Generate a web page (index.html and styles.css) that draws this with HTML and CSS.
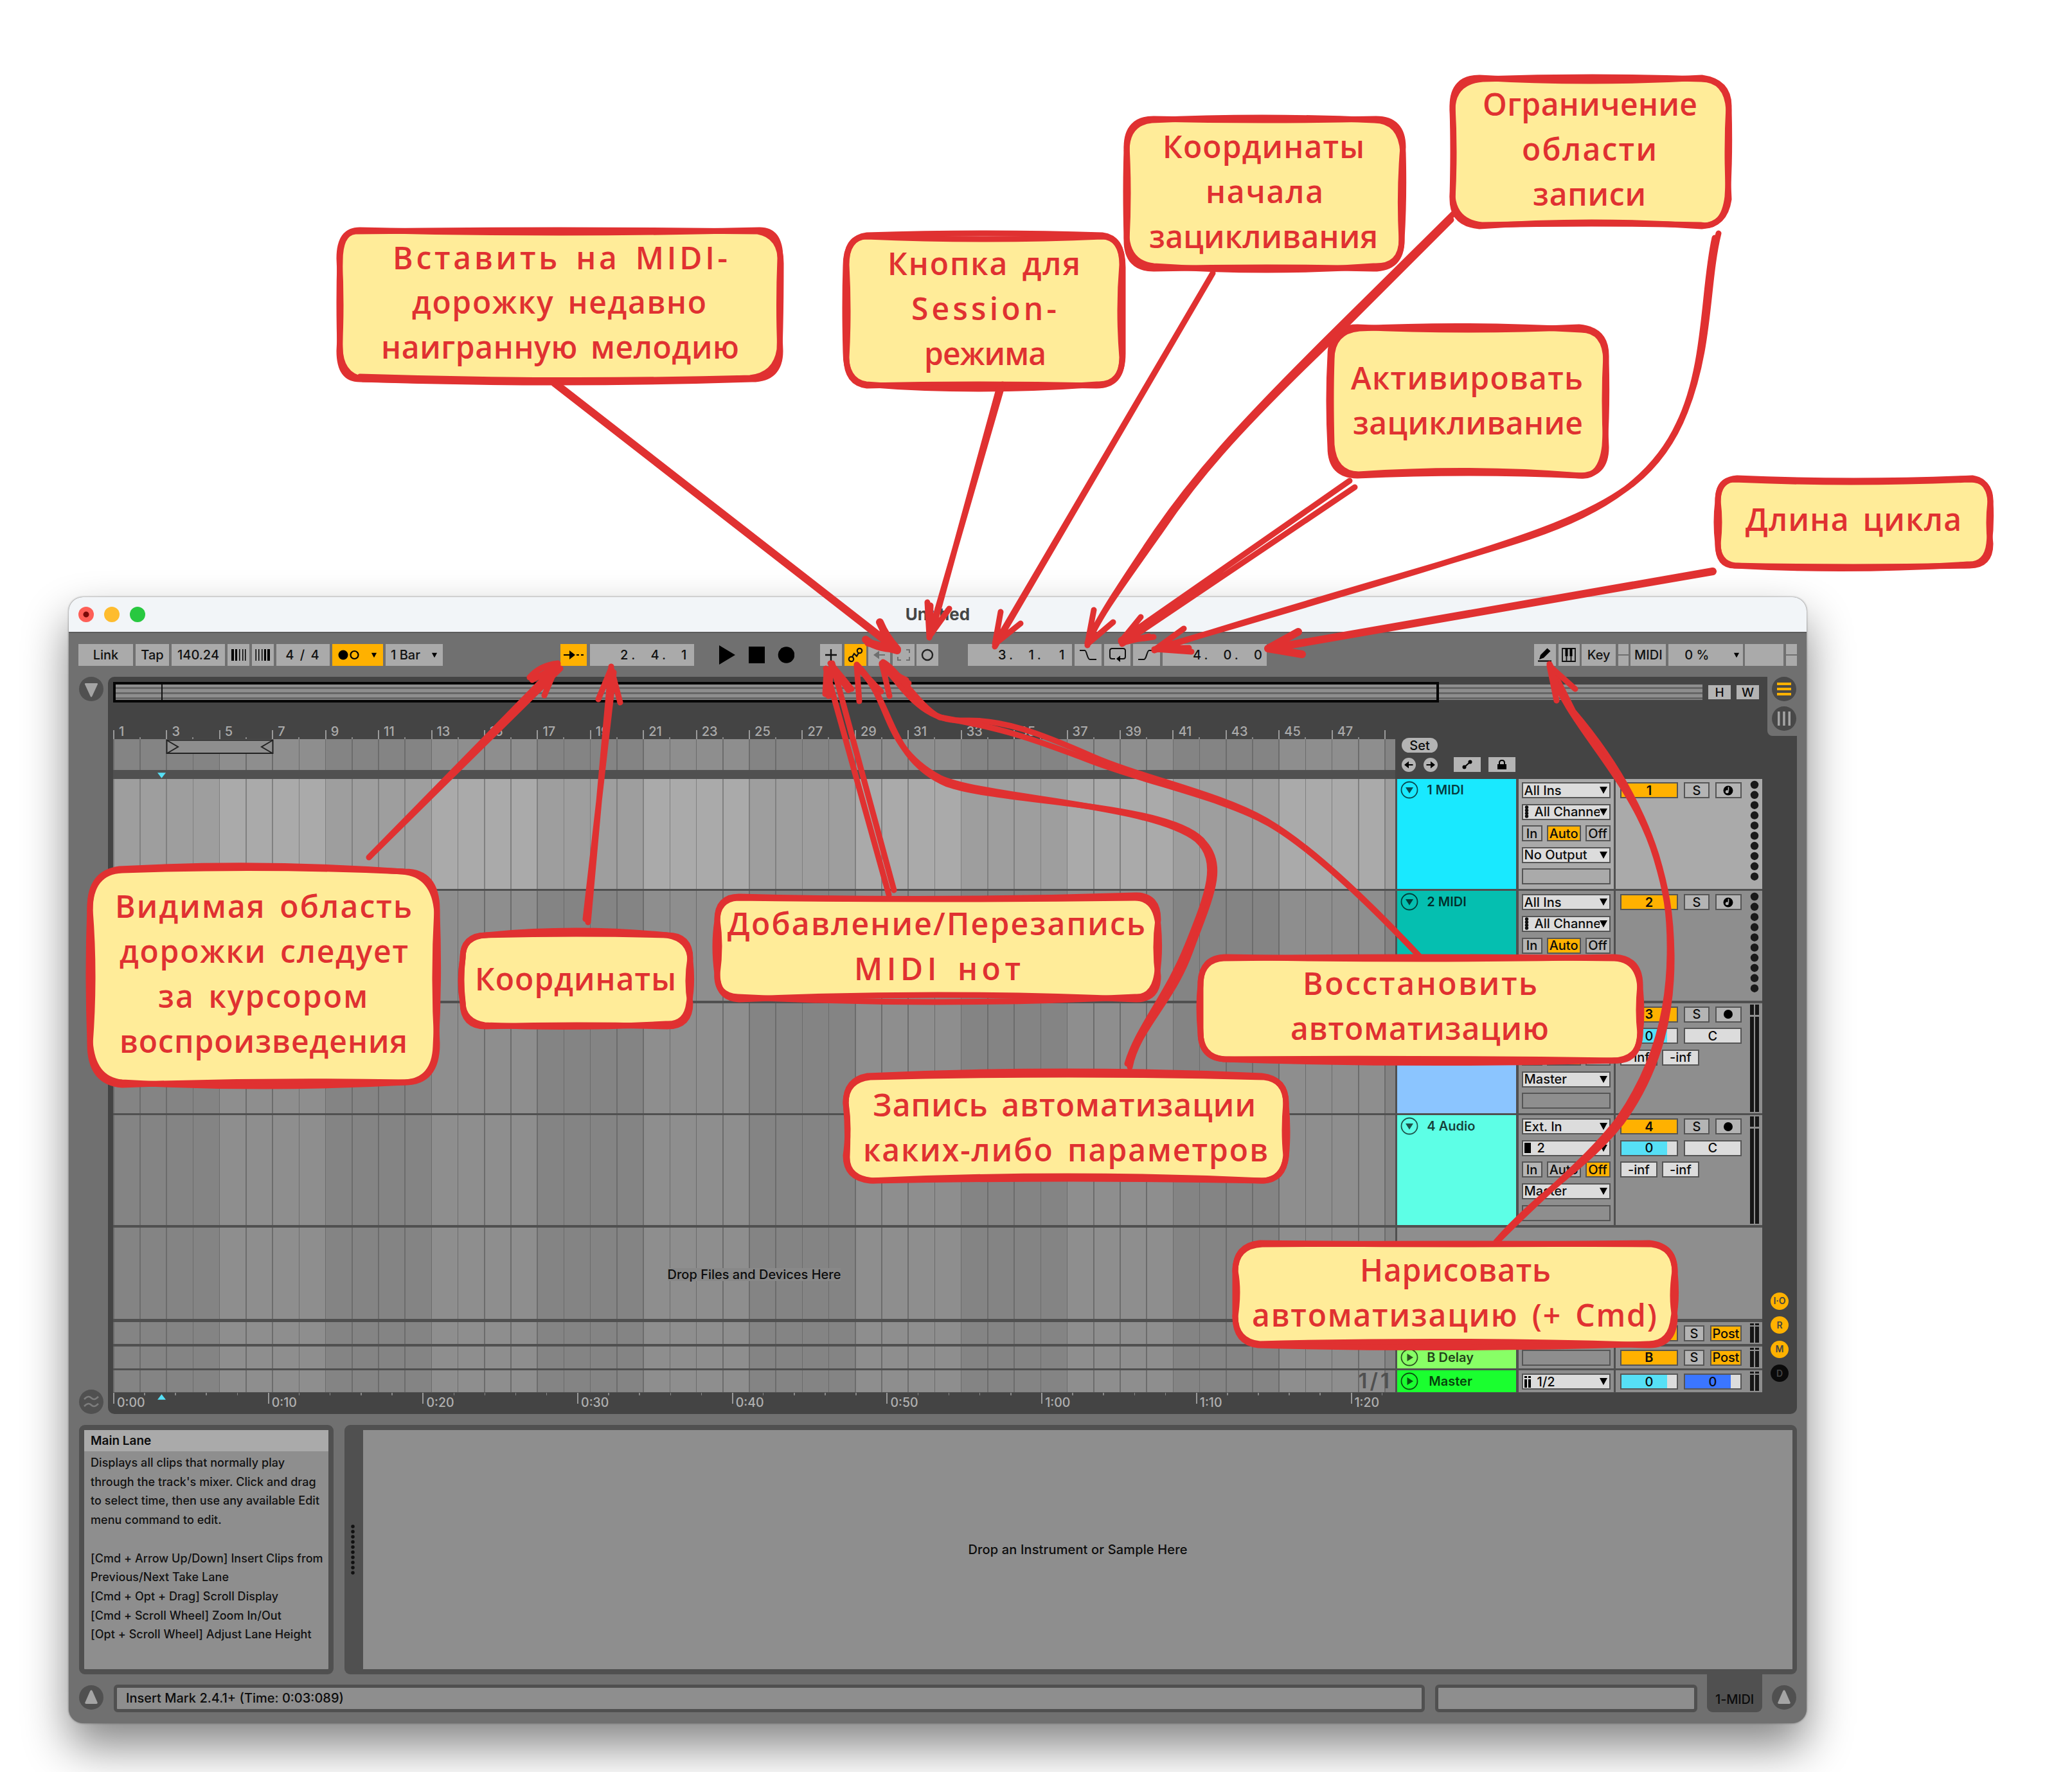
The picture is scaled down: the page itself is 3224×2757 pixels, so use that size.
FILE: index.html
```html
<!DOCTYPE html>
<html lang="ru">
<head>
<meta charset="utf-8">
<title>Untitled</title>
<link rel="stylesheet" href="styles.css">
</head>
<body>
<svg class="defs" width="0" height="0" aria-hidden="true">
  <defs>
    <symbol id="down" viewBox="0 0 12 13"><path d="M0 1h12L6 12z"/></symbol>
    <symbol id="fold" viewBox="0 0 28 28"><circle cx="14" cy="14" r="12.500" fill="none" stroke="currentColor" stroke-width="1.8"/><path d="M8 10h12l-6 9.500z" fill="currentColor"/></symbol>
    <symbol id="unfold" viewBox="0 0 28 28"><circle cx="14" cy="14" r="12.500" fill="none" stroke="currentColor" stroke-width="1.8"/><path d="M10.500 8v12l9.500-6z" fill="currentColor"/></symbol>
    <symbol id="note" viewBox="0 0 16 16"><circle cx="8" cy="8" r="7.500"/><path d="M8.500 2.500v6" stroke="#b4b4b4" stroke-width="1.600"/><circle cx="6.300" cy="9.800" r="2.500" fill="#b4b4b4"/></symbol>
    <symbol id="rec" viewBox="0 0 16 16"><circle cx="8" cy="8" r="7"/></symbol>
    <symbol id="dots" viewBox="0 0 14 160"><path d="M7 7v146" stroke="#1a1a1a" stroke-width="12.500" stroke-linecap="round" stroke-dasharray="0 15.850"/></symbol>
    <symbol id="meter" viewBox="0 0 14 167"><path d="M0 0h6v16H0zM8 0h6v16H8zM0 19h6v148H0zM8 19h6v148H8z" fill="#161616"/></symbol>
    <symbol id="mini" viewBox="0 0 14 30"><path d="M0 0h6v3H0zM8 0h6v3H8zM0 5h6v25H0zM8 5h6v25H8z" fill="#161616"/></symbol>
    <symbol id="up" viewBox="0 0 38 38"><circle cx="19" cy="19" r="19" fill="#505050"/><path d="M19 7.500c1 0 1.500 1 2 2l7.500 17c.6 1.500 0 2.500-1.500 2.500H11c-1.500 0-2.100-1-1.500-2.500l7.500-17c.5-1 1-2 2-2z" fill="#a4a4a4"/></symbol>
  </defs>
</svg>

<main class="window">
  <header class="titlebar">
    <div class="lights"><i class="close"></i><i class="min"></i><i class="max"></i></div>
    <h1>Untitled</h1>
  </header>

  <nav class="toolbar">
    <div class="group tempo">
      <span class="btn">Link</span>
      <span class="btn">Tap</span>
      <span class="btn">140.24</span>
      <span class="btn"><svg width="24" height="22" viewBox="0 0 24 22"><path d="M1 2h4v18H1zM7 2h3v18H7zM13 2h1.500v18H13zM18 2h1.500v18H18zM22 2h1.500v18H22z"/></svg></span>
      <span class="btn"><svg width="24" height="22" viewBox="0 0 24 22"><path d="M.5 2H2v18H.5zM5 2h1.500v18H5zM10 2h1.500v18H10zM14 2h3v18h-3zM19 2h4v18h-4z"/></svg></span>
      <span class="btn sig">4 / 4</span>
      <span class="btn on metro"><svg width="34" height="18" viewBox="0 0 34 18"><circle cx="8" cy="9" r="7.500"/><circle cx="25.500" cy="9" r="6" fill="none" stroke="#000" stroke-width="2.200"/></svg><svg class="tri" width="10" height="9"><use href="#down"/></svg></span>
      <span class="btn metro">1 Bar<svg class="tri" width="10" height="9"><use href="#down"/></svg></span>
    </div>
    <div class="group follow">
      <span class="btn on"><svg width="32" height="16" viewBox="0 0 32 16"><path d="M0 7h9V1l9 7-9 7V9H0zM20 7h4v2h-4zM27 7h4v2h-4z"/></svg></span>
      <span class="btn pos"><b>2.</b><b>4.</b><b>1</b></span>
    </div>
    <svg class="transport" width="117" height="34" viewBox="0 0 117 34"><path d="M0 2v30l25-15zM46 4h25v26H46z"/><circle cx="104.500" cy="17" r="12.800"/></svg>
    <div class="group arr">
      <span class="btn"><svg width="20" height="20" viewBox="0 0 20 20"><path d="M10 1v18M1 10h18" stroke="#111" stroke-width="2.400"/></svg></span>
      <span class="btn on"><svg width="24" height="24" viewBox="0 0 24 24"><g fill="none" stroke="#111" stroke-width="2.200"><circle cx="5.500" cy="18.500" r="3.700"/><circle cx="18.500" cy="5.500" r="3.700"/><path d="M7 15l3-5 4 4 3-5"/></g></svg></span>
      <span class="btn dim"><svg width="18" height="16" viewBox="0 0 18 16"><path d="M0 8l9-6.500V7h9v2H9v5.500z" fill="#6f6f6f"/></svg></span>
      <span class="btn dim"><svg width="20" height="20" viewBox="0 0 20 20"><path d="M1 7V2h5M14 2h5v5M19 13v5h-5M6 18H1v-5" fill="none" stroke="#6f6f6f" stroke-width="2"/></svg></span>
      <span class="btn"><svg width="20" height="20" viewBox="0 0 20 20"><circle cx="10" cy="10" r="8" fill="none" stroke="#222" stroke-width="2.400"/></svg></span>
    </div>
    <div class="group loop">
      <span class="btn pos"><b>3.</b><b>1.</b><b>1</b></span>
      <span class="btn"><svg width="28" height="18" viewBox="0 0 28 18"><path d="M1 2h8c3 0 3.500 14 8 14h10" fill="none" stroke="#111" stroke-width="2"/></svg></span>
      <span class="btn"><svg width="28" height="24" viewBox="0 0 28 24"><path d="M10 18H5.500Q2 18 2 14.500v-9Q2 2 5.500 2h17Q26 2 26 5.500v9Q26 18 22.500 18H17" fill="none" stroke="#111" stroke-width="2"/><path d="M12 18l6-5v10z"/></svg></span>
      <span class="btn"><svg width="28" height="18" viewBox="0 0 28 18"><path d="M1 16h9c4 0 4.500-14 8-14h9" fill="none" stroke="#111" stroke-width="2"/></svg></span>
      <span class="btn pos"><b>4.</b><b>0.</b><b>0</b></span>
    </div>
    <div class="group keys">
      <span class="btn"><svg width="24" height="24" viewBox="0 0 24 24"><path d="M3 19l2-7L15.500 1.500l5 4.500L10 16.500zM1 20.500h21v2H1z"/></svg></span>
      <span class="btn"><svg width="22" height="22" viewBox="0 0 22 22"><path d="M1 1h20v20H1zM7.500 12v9M14.500 12v9" fill="none" stroke="#111" stroke-width="1.800"/><path d="M5.500 1h4v12h-4zM12.500 1h4v12h-4z"/></svg></span>
      <span class="btn">Key</span>
      <span class="split"><i></i><i></i></span>
      <span class="btn">MIDI</span>
      <span class="btn cpu">0 %<svg class="tri" width="10" height="9"><use href="#down"/></svg></span>
      <span class="btn"></span>
      <span class="split"><i></i><i></i></span>
    </div>
  </nav>

  <section class="body">
    <aside class="gutter">
      <svg width="38" height="38" viewBox="0 0 38 38"><circle cx="19" cy="19" r="19" fill="#505050"/><path d="M10 10h18q1.500 0 1 1.500L20.500 30q-1.500 3-3 0L9 11.500Q8.500 10 10 10z" fill="#a4a4a4"/></svg>
      <svg width="38" height="38" viewBox="0 0 38 38"><circle cx="19" cy="19" r="19" fill="#505050"/><path d="M8 15c5-5 8-5 11-2s6 3 11-2M8 26c5-5 8-5 11-2s6 3 11-2" fill="none" stroke="#7c7c7c" stroke-width="2.500"/></svg>
    </aside>
    <div class="panel">
      <div class="arrange">
        <div class="overview">
          <div class="strip"><div class="frame"><i></i></div></div>
          <span class="hw">H</span><span class="hw">W</span>
        </div>
        <div class="head">
          <div class="time">
            <div class="ruler"><span>1</span><span>3</span><span>5</span><span>7</span><span>9</span><span>11</span><span>13</span><span>15</span><span>17</span><span>19</span><span>21</span><span>23</span><span>25</span><span>27</span><span>29</span><span>31</span><span>33</span><span>35</span><span>37</span><span>39</span><span>41</span><span>43</span><span>45</span><span>47</span><span></span></div>
            <div class="lane scrub"><svg width="168" height="24" viewBox="0 0 168 24"><path d="M1.500 1.500h165v20.500H1.500z" fill="#8e8e8e" stroke="#222" stroke-width="2"/><path d="M2 2l17 10L2 22M166 2l-17 10 17 10" fill="none" stroke="#222" stroke-width="2"/></svg></div>
            <div class="marker"><svg width="13" height="9" viewBox="0 0 12 8"><path d="M0 0h12L6 8z" fill="#56e0f6"/></svg></div>
          </div>
          <div class="setters">
            <span class="set">Set</span>
            <div class="tools">
              <svg width="22" height="22" viewBox="0 0 22 22"><circle cx="11" cy="11" r="11" fill="#b4b4b4"/><path d="M4 11l7-5.500V10h6.500v2H11v4.500z"/></svg>
              <svg width="22" height="22" viewBox="0 0 22 22"><circle cx="11" cy="11" r="11" fill="#b4b4b4"/><path d="M18 11l-7-5.500V10H4.500v2H11v4.500z"/></svg>
              <span><svg width="16" height="15" viewBox="0 0 16 15"><circle cx="3.500" cy="11.500" r="3"/><circle cx="12.500" cy="3.500" r="3"/><path d="M3.500 11.500l9-8" stroke="#000" stroke-width="2"/></svg></span>
              <span><svg width="16" height="15" viewBox="0 0 16 15"><path d="M1 7h14v8H1z"/><path d="M4 7V5q0-4 4-4t4 4v2" fill="none" stroke="#000" stroke-width="2"/></svg></span>
            </div>
          </div>
        </div>

        <div class="tracks">
          <div class="track sel">
            <div class="lane"></div>
            <div class="name cyan"><svg width="28" height="28"><use href="#fold"/></svg>1 MIDI</div>
            <div class="io">
              <span class="pick">All Ins<svg width="12" height="13"><use href="#down"/></svg></span>
              <span class="pick chan"><svg width="7" height="20" viewBox="0 0 7 20"><path d="M3.500 3v15" stroke="#111" stroke-width="5.500" stroke-linecap="round" stroke-dasharray="0 4.700"/></svg><em>All Channels</em><svg width="12" height="13"><use href="#down"/></svg></span>
              <div class="mon"><span>In</span><span class="on">Auto</span><span>Off</span></div>
              <span class="pick">No Output<svg width="12" height="13"><use href="#down"/></svg></span>
              <span class="empty"></span>
            </div>
            <div class="mix"><div class="ctl"><span class="on">1</span><span>S</span><span><svg width="16" height="16"><use href="#note"/></svg></span></div><svg class="lvl" width="14" height="160"><use href="#dots"/></svg></div>
          </div>
          <div class="track">
            <div class="lane"></div>
            <div class="name teal"><svg width="28" height="28"><use href="#fold"/></svg>2 MIDI</div>
            <div class="io">
              <span class="pick">All Ins<svg width="12" height="13"><use href="#down"/></svg></span>
              <span class="pick chan"><svg width="7" height="20" viewBox="0 0 7 20"><path d="M3.500 3v15" stroke="#111" stroke-width="5.500" stroke-linecap="round" stroke-dasharray="0 4.700"/></svg><em>All Channels</em><svg width="12" height="13"><use href="#down"/></svg></span>
              <div class="mon"><span>In</span><span class="on">Auto</span><span>Off</span></div>
              <span class="empty"></span>
              <span class="empty"></span>
            </div>
            <div class="mix"><div class="ctl"><span class="on">2</span><span>S</span><span><svg width="16" height="16"><use href="#note"/></svg></span></div><svg class="lvl" width="14" height="160"><use href="#dots"/></svg></div>
          </div>
          <div class="track">
            <div class="lane"></div>
            <div class="name blue"></div>
            <div class="io">
              <span class="empty"></span>
              <span class="empty"></span>
              <div class="mon"><span></span><span class="on"></span><span></span></div>
              <span class="pick">Master<svg width="12" height="13"><use href="#down"/></svg></span>
              <span class="empty"></span>
            </div>
            <div class="mix"><div class="ctl"><span class="on">3</span><span>S</span><span><svg width="16" height="16"><use href="#rec"/></svg></span><span class="vol">0</span><span class="pan">C</span><div class="infs"><span>-inf</span><span>-inf</span></div></div><svg class="lvl" width="14" height="167"><use href="#meter"/></svg></div>
          </div>
          <div class="track">
            <div class="lane"></div>
            <div class="name aqua"><svg width="28" height="28"><use href="#fold"/></svg>4 Audio</div>
            <div class="io">
              <span class="pick">Ext. In<svg width="12" height="13"><use href="#down"/></svg></span>
              <span class="pick chan"><svg width="11" height="16" viewBox="0 0 11 16"><path d="M0 0h10v16H0z"/></svg><em>2</em><svg width="12" height="13"><use href="#down"/></svg></span>
              <div class="mon"><span>In</span><span>Auto</span><span class="on">Off</span></div>
              <span class="pick">Master<svg width="12" height="13"><use href="#down"/></svg></span>
              <span class="empty"></span>
            </div>
            <div class="mix"><div class="ctl"><span class="on">4</span><span>S</span><span><svg width="16" height="16"><use href="#rec"/></svg></span><span class="vol">0</span><span class="pan">C</span><div class="infs"><span>-inf</span><span>-inf</span></div></div><svg class="lvl" width="14" height="167"><use href="#meter"/></svg></div>
          </div>
          <div class="track drop">
            <div class="lane"><p>Drop Files and Devices Here</p></div>
            <div class="blank"></div>
          </div>
          <div class="track ret first">
            <div class="lane"></div>
            <div class="name lime"></div>
            <div class="io"><span class="empty"></span></div>
            <div class="mix"><div class="ctl send"><span class="on"></span><span>S</span><span class="on post">Post</span></div><svg class="lvl" width="14" height="30"><use href="#mini"/></svg></div>
          </div>
          <div class="track ret">
            <div class="lane"></div>
            <div class="name lime"><svg width="28" height="28"><use href="#unfold"/></svg>B Delay</div>
            <div class="io"><span class="empty"></span></div>
            <div class="mix"><div class="ctl send"><span class="on">B</span><span>S</span><span class="on post">Post</span></div><svg class="lvl" width="14" height="30"><use href="#mini"/></svg></div>
          </div>
          <div class="track ret">
            <div class="lane"><strong>1/1</strong></div>
            <div class="name green"><svg width="28" height="28"><use href="#unfold"/></svg>Master</div>
            <div class="io"><span class="pick chan"><svg width="11" height="18" viewBox="0 0 11 18"><path d="M0 0h4v3H0zM6 0h4v3H6zM0 5h4v13H0zM6 5h4v13H6z"/></svg><em>1/2</em><svg width="12" height="13"><use href="#down"/></svg></span></div>
            <div class="mix"><div class="ctl"><span class="vol">0</span><span class="cue">0</span></div><svg class="lvl" width="14" height="30"><use href="#mini"/></svg></div>
          </div>
        </div>
        <div class="seconds"><span>0:00</span><span>0:10</span><span>0:20</span><span>0:30</span><span>0:40</span><span>0:50</span><span>1:00</span><span>1:10</span><span>1:20</span><svg width="13" height="9" viewBox="0 0 12 8"><path d="M0 8h12L6 0z" fill="#56e0f6"/></svg></div>
      </div>

      <div class="rail">
        <div class="views">
          <svg width="38" height="38" viewBox="0 0 38 38"><circle cx="19" cy="19" r="19" fill="#484848"/><path d="M8 9h22v4H8zM8 17h22v4H8zM8 25h22v4H8z" fill="#ffb100"/></svg>
          <svg width="38" height="38" viewBox="0 0 38 38"><circle cx="19" cy="19" r="19" fill="#484848"/><path d="M9 8h3.500v22H9zM17.200 8h3.500v22h-3.500zM25.500 8H29v22h-3.500z" fill="#a4a4a4"/></svg>
        </div>
        <div class="shows"><b>I·O</b><b>R</b><b>M</b><b class="off">D</b></div>
      </div>
    </div>
  </section>

  <section class="detail">
    <article class="info">
      <h2>Main Lane</h2>
      <p>Displays all clips that normally play<br>through the track's mixer. Click and drag<br>to select time, then use any available Edit<br>menu command to edit.<br><br>[Cmd + Arrow Up/Down] Insert Clips from<br>Previous/Next Take Lane<br>[Cmd + Opt + Drag] Scroll Display<br>[Cmd + Scroll Wheel] Zoom In/Out<br>[Opt + Scroll Wheel] Adjust Lane Height</p>
    </article>
    <div class="device">
      <svg width="6" height="78" viewBox="0 0 6 78"><path d="M3 3v73" stroke="#111" stroke-width="5.500" stroke-linecap="round" stroke-dasharray="0 8"/></svg>
      <div>Drop an Instrument or Sample Here</div>
    </div>
  </section>

  <footer class="status">
    <svg width="38" height="38"><use href="#up"/></svg>
    <div class="msg">Insert Mark 2.4.1+ (Time: 0:03:089)</div>
    <div class="msg"></div>
    <div class="tab">1-MIDI</div>
    <svg width="38" height="38"><use href="#up"/></svg>
  </footer>
</main>

<svg class="notes" width="3224" height="2757" viewBox="0 0 3224 2757">
  <g class="arrows">
    <path d="M2208 1487Q2060 1330 1974 1279C1900 1235 1780 1212 1698 1176S1560 1119 1500 1121C1430 1124 1400 1060 1372 1034"/>
    <path d="M2205 1484Q2056 1328 1974 1281C1900 1240 1790 1219 1698 1184S1560 1133 1462 1116C1430 1100 1395 1040 1374 1030M1384 1083L1373 1036M1414 1063L1372 1032M1410 1058L1378 1042"/>
    <path d="M2328 1932C2400 1850 2470 1815 2524 1745C2585 1660 2602 1570 2601 1485C2600 1420 2592 1380 2577 1330Q2540 1215 2448 1107L2411 1033"/>
    <path d="M2331 1930C2410 1850 2474 1800 2518 1742C2578 1655 2597 1570 2598 1485C2599 1420 2592 1385 2577 1335C2540 1210 2440 1130 2412 1040M2422 1090L2411 1036L2451 1072"/>
  </g>
  <g class="boxes">
    <path d="M560 358q311 8 622 0q32 0 32 44q-3 74 0 144q0 44-44 44q-305 10-610 0q-32 0-32-44q4-72 0-144q0-44 32-44z"/>
    <path d="M1349 368q190 8 365 0q32 0 32 44q-6 70 0 144q0 44-40 44q-190-4-357 0q-32-4-32-44q4-72 0-144q0-44 32-44z"/>
    <path d="M1795 185q170 4 346 0q42 0 42 44q-6 70-2 145q0 44-44 44q-160-4-342 0q-42 0-42-44q4-75 0-145q0-44 42-44z"/>
    <path d="M2302 121q170 10 346 0q42 6 42 44q-4 70 0 145q-6 40-42 42q-170-12-346 0q-42-4-42-42q4-75 0-145q0-44 42-44z"/>
    <path d="M2112 509q170 8 345 0q42 4 42 44q-4 70 0 143q0 44-42 44q-170-8-345 0q-42 0-42-44q-4-73 0-143q0-44 42-44z"/>
    <path d="M2699 746q180 8 366 0q32 0 32 34q-4 34 0 66q0 34-32 34q-180 4-366 0q-26 0-26-34q4-34 0-66q0-34 26-34z"/>
    <path d="M190 1354q220-8 440 2q50 0 50 60q-6 106 0 208q0 60-50 60q-220-4-440 4q-50-4-50-64q8-106 0-208q0-60 50-62z"/>
    <path d="M756 1455q140-4 282 0q36 0 36 36q-6 36 0 70q0 36-36 36q-140-4-282 0q-36 0-36-36q-6-34 0-70q0-36 36-36z"/>
    <path d="M1150 1395q310 8 618-2q34 0 34 38q-6 42 0 88q0 36-34 36q-310-14-618 0q-34-2-34-40q6-44 0-84q0-36 34-36z"/>
    <path d="M1354 1676q310-8 613 0q34 4 34 40q-4 44 0 82q-4 39-38 39q-300-14-609 0q-38-4-38-39q6-42 0-82q0-36 38-40z"/>
    <path d="M1908 1489q310 6 604 0q40 2 40 44q-4 40 0 74q0 43-44 43q-300-4-600-2q-40 0-40-42q-4-40 0-74q0-43 40-43z"/>
    <path d="M1960 1934q310 4 606 0q40 4 40 44q-6 40 0 70q0 45-40 45q-300-10-606-2q-38-4-38-43q6-40 0-70q0-40 38-44z"/>
  </g>
  <g class="again">
    <path d="M553 360q320-4 626 0q36 6 36 50q0 74-2 134q-6 40-46 44q-305 10-602 2q-36-6-36-50q-2-72 0-134q0-44 24-46zM560 586q305 10 610 2"/>
    <path d="M1349 366q190-6 366 0q32 4 32 50q0 70 0 134q0 50-40 48q-190 14-359 0q-32-4-32-50q-2-72 0-134q0-44 33-48z"/>
    <path d="M1792 187q170-8 346 0q42 0 45 50q2 70-2 135q0 44-44 42q-160 12-342 0q-38-4-42-44q-2-75 0-135q0-44 39-48z"/>
    <path d="M2307 123q170-6 340 0q40 0 43 48q2 70-2 135q-6 50-42 44q-170-4-340 0q-42-4-46-44q2-75 0-135q0-44 47-48z"/>
    <path d="M2115 511q170-8 345 2q38 0 39 48q2 70-2 133q-6 50-38 46q-170-14-345-2q-38 0-42-46q-2-73 0-133q0-44 43-48z"/>
    <path d="M2703 744q180 8 366 0q26 4 28 36q2 34-2 66q-4 34-34 32q-180 12-362 2q-26-4-26-34q-4-34 0-66q0-34 30-36z"/>
    <path d="M186 1352q220-12 440 4q50 4 54 64q4 106-2 208q-2 54-48 56q-220 12-440 0q-46-4-50-64q-4-106 0-208q0-54 46-60z"/>
    <path d="M756 1455q140-14 282 0q36 6 36 40q4 36-2 66q-4 34-36 32q-140 8-282 2q-34-6-34-36q-4-34 0-70q0-32 36-34z"/>
    <path d="M1148 1397q310 4 618 0q32 0 36 42q4 42-2 78q-6 36-34 34q-310 16-618 0q-34-2-32-36q-6-44 0-82q0-34 32-36z"/>
    <path d="M1350 1674q310-14 613 0q38 4 38 44q4 44 0 82q-4 34-34 37q-300-6-609 0q-42-4-40-39q2-42-2-82q0-36 34-42z"/>
    <path d="M1904 1491q310-4 608 0q38 2 40 46q4 40 0 70q-2 46-40 43q-300 8-608-2q-36-4-36-42q0-40 0-74q0-39 36-41z"/>
    <path d="M1964 1936q310-2 606 0q36 4 36 44q4 40-2 70q-4 42-40 41q-300 10-606 2q-36-4-36-45q0-40 0-70q0-40 42-42z"/>
  </g>
  <g class="arrows">
    <path class="bold" d="M863 596L1396 1011M1369 968Q1378 990 1396 1010Q1360 1008 1347 995M1351 1000L1396 1012"/>
    <path d="M1560 598L1446 992M1554 606L1450 985M1443 937L1446 990L1477 947M1448 942L1447 985"/>
    <path d="M1887 425L1548 1006M1883 432L1552 996M1557 952L1548 1002L1588 970"/>
    <path d="M2264 330L2079 513C1920 670 1860 740 1800 826C1750 900 1710 960 1692 1000M2258 342L2060 540C1920 675 1860 745 1803 830C1750 905 1705 965 1692 1004M1702 949L1692 1002L1732 968"/>
    <path d="M2674 363C2655 440 2662 540 2622 640C2585 735 2520 780 2400 825S2000 950 1796 1010M2668 370C2650 450 2656 570 2612 660C2575 740 2500 795 2380 835S2000 945 1796 1012M1842 978L1798 1010L1854 1014M1850 1008L1800 1009"/>
    <path d="M2100 748L1744 996M2108 758L1746 1002M1775 960L1744 998L1795 991M1788 990L1746 1000"/>
    <path class="bold" d="M2665 889L1976 1009M2020 983L1973 1009L2026 1018"/>
    <path d="M574 1334L868 1034M582 1326L872 1040M824 1054Q840 1035 868 1032L847 1082M828 1058L868 1036"/>
    <path d="M915 1435L951 1037M911 1430L955 1046M931 1088L951 1040L965 1093"/>
    <path d="M1383 1392L1285 1040M1391 1385L1295 1032M1289 1083L1294 1034L1325 1072M1284 1080L1286 1044M1320 1074L1292 1032"/>
    <path d="M1758 1660C1770 1600 1823 1560 1852 1480S1908 1350 1874 1312C1830 1250 1560 1250 1474 1220C1380 1180 1390 1090 1333 1034"/>
    <path d="M1754 1655C1770 1600 1816 1550 1848 1470S1900 1340 1862 1306C1790 1250 1530 1242 1462 1210C1370 1160 1390 1090 1333 1037M1337 1091L1333 1036L1371 1076"/>
  </g>
  <g class="words">
    <text x="611" y="419" textLength="521">Вставить на MIDI-</text>
    <text x="641" y="488" textLength="458">дорожку недавно</text>
    <text x="593" y="558" textLength="557">наигранную мелодию</text>
    <text x="1381" y="428" textLength="300">Кнопка для</text>
    <text x="1418" y="498" textLength="226">Session-</text>
    <text x="1438" y="568" textLength="190">режима</text>
    <text x="1809" y="246" textLength="314">Координаты</text>
    <text x="1876" y="316" textLength="183">начала</text>
    <text x="1788" y="386" textLength="356">зацикливания</text>
    <text x="2307" y="180" textLength="334">Ограничение</text>
    <text x="2368" y="250" textLength="210">области</text>
    <text x="2385" y="320" textLength="176">записи</text>
    <text x="2102" y="606" textLength="361">Активировать</text>
    <text x="2105" y="676" textLength="358">зацикливание</text>
    <text x="2716" y="826" textLength="336">Длина цикла</text>
    <text x="179" y="1428" textLength="462">Видимая область</text>
    <text x="186" y="1498" textLength="449">дорожки следует</text>
    <text x="246" y="1568" textLength="326">за курсором</text>
    <text x="186" y="1638" textLength="448">воспроизведения</text>
    <text x="739" y="1541" textLength="313">Координаты</text>
    <text x="1132" y="1455" textLength="650">Добавление/Перезапись</text>
    <text x="1329" y="1525" textLength="259">MIDI нот</text>
    <text x="1358" y="1737" textLength="596">Запись автоматизации</text>
    <text x="1343" y="1807" textLength="630">каких-либо параметров</text>
    <text x="2027" y="1548" textLength="365">Восстановить</text>
    <text x="2008" y="1618" textLength="402">автоматизацию</text>
    <text x="2116" y="1994" textLength="297">Нарисовать</text>
    <text x="1948" y="2064" textLength="630">автоматизацию (+ Cmd)</text>
  </g>
</svg>
</body>
</html>
```
FILE: styles.css
```css
* { box-sizing: border-box; margin: 0; padding: 0; }
body { width: 3224px; height: 2757px; position: relative; overflow: hidden; background: #fff; font: 500 20px/1 Inter, "Liberation Sans", sans-serif; color: #0c0c0c; }
svg { display: block; flex: none; }
.defs { position: absolute; }
i, em { font-style: normal; }

.window { position: absolute; left: 107px; top: 929px; width: 2704px; height: 1752px; display: flex; flex-direction: column; border-radius: 22px; overflow: hidden; background: #707070; box-shadow: 0 0 3px rgba(0,0,0,.5), 0 36px 70px rgba(0,0,0,.48); }
.titlebar { height: 56px; flex: none; display: grid; grid-template-columns: 200px 1fr 200px; align-items: center; background: #f2f5f8; border-bottom: 2px solid #5c5c5c; }
.lights { display: flex; gap: 16px; padding-left: 15px; }
.lights i { width: 24px; height: 24px; border-radius: 50%; }
.close { background: radial-gradient(circle, #7a0b08 4px, #fe5f57 5px); }
.min { background: #febc2e; }
.max { background: #28c840; }
.titlebar h1 { font-size: 26px; font-weight: 700; color: #454545; text-align: center; }

.toolbar { height: 68px; flex: none; display: flex; align-items: flex-start; padding: 17px 15px 0; }
.group { display: grid; gap: 4px; height: 34px; }
.btn { display: flex; align-items: center; justify-content: center; background: #aaa; white-space: nowrap; min-width: 0; height: 34px; color: #111; }
.on { background: #ffb100; }
.tempo { grid-template-columns: 85px 52px 83px 34px 34px 83px 79px 89px; }
.sig { letter-spacing: 2px; }
.metro { gap: 17px; }
.follow { grid-template-columns: 41px 162px; gap: 5px; margin-left: 183px; }
.pos { justify-content: flex-start; padding-left: 47px; }
.pos b { width: 47.500px; font-weight: 500; letter-spacing: 5px; }
.pos b:last-child { width: auto; letter-spacing: 0; }
.transport { margin-left: 39px; }
.arr { grid-template-columns: repeat(5, 34px); gap: 3.500px; margin-left: 40px; }
.loop { grid-template-columns: 162px 42px 41px 42px 162px; margin-left: 46px; }
.keys { grid-template-columns: 34px 33px 53px 16px 55px 116px 60px 17px; gap: 3.570px; margin-left: auto; }
.split { display: grid; gap: 2px; height: 34px; }
.split i { background: #aaa; }
.cpu { gap: 38px; padding-left: 21px; }

.body { height: 1147px; flex: none; display: flex; }
.gutter { width: 61px; display: flex; flex-direction: column; justify-content: space-between; align-items: center; padding: 0 0 0 8px; }
.panel { width: 2628px; display: flex; background: #444; border-radius: 10px 0 10px 10px; }
.arrange { width: 2574px; padding-left: 8px; display: flex; flex-direction: column; }
.overview { height: 40px; padding-top: 8px; display: flex; align-items: center; flex: none; }
.strip { width: 2473px; height: 24px; background: repeating-linear-gradient(#8e8e8e 0 4px, #666 4px 7px, #8e8e8e 7px 8px); }
.frame { width: 2063px; height: 32px; margin-top: -4px; border: 4px solid #050505; }
.frame i { display: block; width: 2px; height: 24px; margin-left: 71px; background: #111; }
.hw { width: 35px; height: 22px; margin-left: 9px; display: grid; place-items: center; background: #b4b4b4; font-size: 19px; }
.head { display: grid; grid-template-columns: 1995px 567px; column-gap: 4px; height: 119px; flex: none; }
.time { display: flex; flex-direction: column; }
.ruler { height: 57px; display: flex; align-items: flex-end; overflow: hidden; }
.ruler span { flex: 0 0 82.430px; height: 22px; padding: 1px 0 0 9px; color: #aaa; font-size: 20px; background: linear-gradient(#999,#999) 0 100%/2px 14px no-repeat, linear-gradient(#888,#888) 41px 100%/2px 3px no-repeat; line-height: 18px; }
.lane { --a: #848484; --b: #8e8e8e; --l: #6c6c6c; background: repeating-linear-gradient(90deg, var(--l) 0 1.600px, transparent 1.600px 41.215px), repeating-linear-gradient(90deg, var(--a) 0 164.860px, var(--b) 164.860px 329.720px); }
.scrub { height: 48px; padding: 0 0 0 82px; }
.marker { height: 14px; padding: 4px 0 0 69px; background: #505050; }
.setters { padding: 55px 0 0 6px; }
.set { display: grid; place-items: center; width: 56px; height: 23px; border-radius: 12px; background: #b4b4b4; }
.tools { display: flex; align-items: center; gap: 12px; margin-top: 7px; }
.tools span { width: 42px; height: 23px; display: grid; place-items: center; background: #b4b4b4; }
.tools span:nth-of-type(1) { margin-left: 13px; }

.tracks { background: #505050; display: flex; flex-direction: column; gap: 3.400px; height: 955px; flex: none; }
.track { display: grid; grid-template-columns: 1995px 185px 148px 228px; column-gap: 3.300px; height: 171px; flex: none; }
.name { display: flex; gap: 13px; padding: 3px 0 0 5px; line-height: 28px; color: rgba(0,0,0,.75); font-weight: 600; }
.name svg { color: rgba(0,0,0,.68); }
.green { gap: 16px; }
.cyan { background: #19e9ff; } .teal { background: #05bfb0; } .blue { background: #8bc5ff; } .aqua { background: #5dffe6; } .lime { background: #88ff66; } .green { background: #1aff2f; }
.io, .mix, .blank { background: #8e8e8e; }
.sel .io, .sel .mix { background: #aaa; }
.sel .lane { --a: #9e9e9e; --b: #aaaaaa; --l: #808080; }
.io { display: flex; flex-direction: column; gap: 8.600px; padding: 5px 5px 0; }
.pick, .empty { height: 25px; flex: none; border: 2px solid #555; }
.pick { display: flex; align-items: center; justify-content: space-between; padding: 0 3px 0 2px; background: #dcdcdc; white-space: nowrap; }
.chan em { flex: 1; overflow: hidden; margin-left: 9px; line-height: 22px; }
.mon { display: grid; grid-template-columns: 32px 53px 39px; gap: 7px; height: 25px; flex: none; }
.mon span, .ctl > span, .infs span { display: grid; place-items: center; height: 25px; border: 2px solid #555; background-color: #b4b4b4; overflow: hidden; white-space: nowrap; }
.mon .on, .ctl > .on { background-color: #ffb100; }
.mix { display: flex; justify-content: space-between; padding: 5px 5px 0 7px; }
.lvl { margin-top: -3px; }
.ctl { width: 190px; display: grid; grid-template-columns: 90px 40px 41px; column-gap: 9px; row-gap: 8.600px; align-content: start; }
.ctl > .on { font-weight: 600; }
.ctl .vol { background: linear-gradient(90deg, #56e0f6 83%, #dcdcdc 83%); }
.ctl .pan { grid-column: span 2; background: #dcdcdc; }
.ctl .cue { grid-column: span 2; background: linear-gradient(90deg, #3b76ff 83%, #dcdcdc 83%); }
.infs { grid-column: span 3; display: grid; grid-template-columns: 58px 58px; gap: 7px; }
.infs span { background: #dcdcdc; }
.ctl.send { grid-template-columns: 90px 32px 49px; }
.ctl > .post { font-weight: 500; letter-spacing: -.2px; }
.drop { height: 142.500px; grid-template-columns: 1995px 1fr; }
.drop p { width: max-content; margin: 63px auto 0; background: #888; }
.ret { height: 34px; }
.ret.first { margin-top: 2px; }
.ret .lane { display: flex; justify-content: flex-end; padding-right: 5px; }
.ret strong { font-size: 33px; font-weight: 600; color: #505050; line-height: 33px; letter-spacing: 4px; }
.seconds { position: relative; height: 33px; display: flex; width: 1994px; overflow: hidden; background: repeating-linear-gradient(90deg, #888 0 1.500px, transparent 1.500px 48.140px) 0 0/100% 4px no-repeat; }
.seconds span { flex: 0 0 240.700px; height: 17px; padding: 5px 0 0 4px; color: #b0b0b0; border-left: 2px solid #999; font-size: 19.500px; line-height: 20px; }
.seconds svg { position: absolute; left: 69px; top: 2px; }
.rail { width: 54px; display: flex; flex-direction: column; justify-content: space-between; }
.views { width: 46px; height: 92px; margin-left: 8px; background: #707070; border-radius: 0 0 0 8px; display: flex; flex-direction: column; gap: 8px; padding-left: 7px; }
.shows { display: flex; flex-direction: column; gap: 10.500px; padding: 0 0 50px 13px; }
.shows b { width: 28px; height: 27px; border-radius: 50%; display: grid; place-items: center; background: #ffb100; color: #444; font-size: 14px; font-weight: 600; }
.shows .off { background: #0a0a0a; color: #444; }

.detail { display: flex; gap: 17px; padding: 17px 15px 0 16px; height: 405px; flex: none; }
.info { width: 396px; height: 388px; border: 8px solid #505050; border-radius: 9px; background: #8e8e8e; }
.info h2 { height: 33px; padding-left: 10px; font-size: 19px; line-height: 34px; font-weight: 600; background: #aaa; }
.info p { padding: 3px 0 0 10px; font-size: 18px; line-height: 29.700px; white-space: nowrap; letter-spacing: .05px; color: #111; }
.device { flex: 1; height: 388px; display: flex; align-items: center; gap: 13px; padding: 8px 7px 8px 10px; border-radius: 9px; background: #505050; }
.device div { flex: 1; height: 372px; display: grid; place-items: center; background: #8e8e8e; letter-spacing: .15px; }

.status { display: flex; height: 76px; padding: 0 16px; align-items: flex-start; }
.status svg { margin-top: 17px; }
.msg { margin: 16px 0 0 16px; height: 43px; width: 2040px; border: 5px solid #505050; border-radius: 6px; background: #8e8e8e; padding-left: 14px; line-height: 33px; }
.msg + .msg { width: 408px; }
.tab { width: 86px; height: 60px; margin: -1px 15px 0; background: #505050; border-radius: 0 0 9px 9px; text-align: center; line-height: 80px; letter-spacing: -.2px; }

.notes { position: absolute; left: 0; top: 0; }
.arrows path, .again path { fill: none; stroke: #e03131; stroke-width: 9px; stroke-linecap: round; stroke-linejoin: round; }
.arrows .bold { stroke-width: 12px; }
.boxes path { fill: #ffec99; stroke: #e03131; stroke-width: 9px; stroke-linejoin: round; }
.words text { font: 600 48px "Open Sans", sans-serif; fill: #e03131; word-spacing: 7px; }
```
